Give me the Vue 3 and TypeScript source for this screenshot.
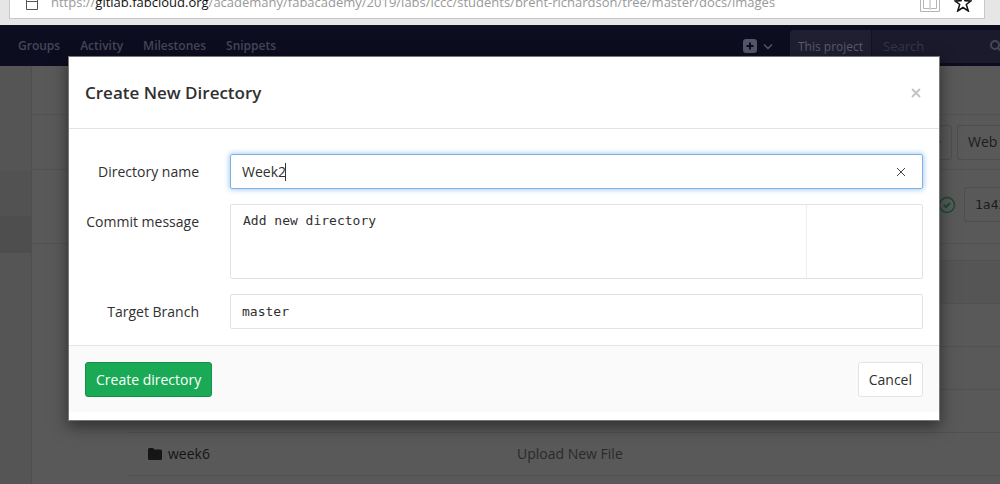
<script setup lang="ts">
import { ref } from 'vue'

const navLinks = ['Groups', 'Activity', 'Milestones', 'Snippets']
const directoryName = ref('Week2')
const commitMessage = ref('Add new directory')
const targetBranch = ref('master')

const rows = [
  { name: '', message: '' },
  { name: '', message: '' },
  { name: '', message: '' },
  { name: 'week6', message: 'Upload New File' },
]
</script>

<template>
  <div class="screen">
    <header class="chrome">
      <div class="address">
        <svg class="lock" width="14" height="18" viewBox="0 0 14 18" fill="none" stroke="#555">
          <path d="M3.5 5.5V4a3.500 3.500 0 0 1 7 0v1.500M1.500 5.500h11v11h-11zM1.500 8.500h11" />
        </svg>
        <a class="url" href="#">https://<b>gitlab.fabcloud.org</b>/academany/fabacademy/2019/labs/iccc/students/brent-richardson/tree/master/docs/images</a>
        <svg class="book" width="20" height="18" viewBox="0 0 20 18" fill="none" stroke="#b5b5b5">
          <path d="M0.5 2.5V17.5H19.5V2.5M3.5 1.5V14.5H9L10 15.5L11 14.5H16.5V1.5M10 1V15" />
        </svg>
        <svg class="star" width="18" height="18" viewBox="0 0 18 18" fill="none" stroke="#111" stroke-width="1.5">
          <path d="M9 1l2 5.700 6 .2-4.700 3.600 2 6.500L9 13.500 3.700 17l2-6.500L1 6.900l6-.2z" />
        </svg>
      </div>
    </header>

    <nav class="navbar">
      <a v-for="link in navLinks" :key="link" href="#">{{ link }}</a>
      <button class="new-menu" type="button" aria-label="New">
        <svg width="32" height="16" viewBox="0 0 32 16">
          <rect x="1" y="1" width="14" height="14" rx="3" fill="#56566a" />
          <path d="M8 4.500v7M4.500 8h7" stroke="#0d0d20" stroke-width="2" fill="none" />
          <path d="M22 6.500l4 4 4-4" stroke="#56566a" stroke-width="1.500" fill="none" />
        </svg>
      </button>
      <div class="search">
        <span class="scope">This project</span>
        <input type="text" placeholder="Search" aria-label="Search" />
        <svg width="11" height="14" viewBox="0 0 11 14" fill="none" stroke="#464658" stroke-width="2">
          <circle cx="6" cy="6" r="4" /><path d="M9 9l4 4" />
        </svg>
      </div>
    </nav>

    <div class="page">
      <aside class="sidebar"><div class="group"></div><div class="active"></div></aside>
      <main class="content">
        <div class="breadcrumbs"></div>
        <div class="actions">
          <button class="page-button" type="button">Tree</button>
          <button class="page-button web" type="button">Web IDE</button>
        </div>
        <div class="commit">
          <svg width="18" height="18" viewBox="0 0 18 18" fill="none" stroke="#174c30" stroke-width="1.500">
            <circle cx="9" cy="9" r="7.500" /><path d="M6 9l2 2 4-4" stroke-width="2" />
          </svg>
          <button class="page-button sha" type="button">1a4213</button>
        </div>
        <table class="files">
          <thead><tr><th></th><th></th></tr></thead>
          <tbody>
            <tr v-for="(row, i) in rows" :key="i">
              <td class="name">
                <a v-if="row.name" href="#">
                  <svg width="14" height="12" viewBox="0 0 14 12" fill="#151515">
                    <path d="M0 1.500Q0 0 1.500 0H5l1.500 1.500h6Q14 1.500 14 3v7.500Q14 12 12.500 12h-11Q0 12 0 10.500z" />
                  </svg>{{ row.name }}
                </a>
              </td>
              <td class="message">{{ row.message }}</td>
            </tr>
          </tbody>
        </table>
      </main>
    </div>

    <div class="modal" role="dialog" aria-labelledby="modal-title">
      <div class="modal-header">
        <h1 id="modal-title">Create New Directory</h1>
        <button class="close" type="button" aria-label="Close">
          <svg width="10" height="10" viewBox="0 0 10 10" fill="none" stroke="#c4c4c4" stroke-width="2">
            <path d="M1 1l8 8M9 1L1 9" />
          </svg>
        </button>
      </div>
      <form @submit.prevent>
        <div class="modal-body">
          <div class="row">
            <label for="dir">Directory name</label>
            <div class="field focused">
              <span class="entry">
                <input id="dir" v-model="directoryName" type="text" size="5" />
                <i class="caret"></i>
              </span>
              <button class="clear" type="button" aria-label="Clear" @click="directoryName = ''">
                <svg width="10" height="10" viewBox="0 0 10 10" fill="none" stroke="#444">
                  <path d="M1 1l8 8M9 1L1 9" />
                </svg>
              </button>
            </div>
          </div>
          <div class="row">
            <label for="message">Commit message</label>
            <div class="field message-field">
              <textarea id="message" v-model="commitMessage"></textarea>
            </div>
          </div>
          <div class="row">
            <label for="branch">Target Branch</label>
            <div class="field"><input id="branch" v-model="targetBranch" class="mono" type="text" /></div>
          </div>
        </div>
        <div class="modal-footer">
          <button class="create" type="submit">Create directory</button>
          <button class="cancel" type="button">Cancel</button>
        </div>
      </form>
    </div>
  </div>
</template>

<style>
body { background: #595959; overflow: hidden; }
</style>

<style scoped>
.screen {
  position: relative;
  height: 100vh;
  overflow: hidden;
  display: flex;
  flex-direction: column;
  font-family: "Open Sans", "Noto Sans", sans-serif;
  font-size: 14px;
  line-height: 20px;
  color: #303030;
}
.screen *, .screen { box-sizing: border-box; }
a { color: inherit; text-decoration: none; }
button, input, textarea { font: inherit; color: inherit; margin: 0; }
button { padding: 0; border: 0; background: none; white-space: nowrap; }
svg { display: block; flex: none; }

.chrome {
  flex: none;
  height: 25px;
  overflow: hidden;
  display: flex;
  align-items: flex-end;
  padding: 0 15px 6px 9px;
  background: #e6e6e6;
}
.address {
  flex: 1;
  min-width: 0;
  height: 36px;
  display: flex;
  align-items: flex-end;
  padding: 0 12px 6px 15px;
  background: #fff;
  border: 1px solid #c8c8c8;
}
.lock { margin-bottom: 1px; }
.url {
  flex: 1;
  min-width: 0;
  padding-left: 12px;
  overflow: hidden;
  white-space: nowrap;
  font-size: 13px;
  color: #999;
}
.url b { font-weight: 400; color: #111; }
.star { margin-left: 14px; }

.navbar {
  flex: none;
  height: 41px;
  display: flex;
  align-items: center;
  gap: 20px;
  padding: 1px 0 0 18px;
  background: #0d0d20;
  color: #464658;
  font-size: 12px;
  font-weight: 600;
}
.new-menu { margin-left: auto; }
.search {
  width: 210px;
  height: 33px;
  display: flex;
  align-items: center;
  background: #1a1a2c;
  border-radius: 4px 0 0 4px;
  font-weight: 400;
  margin-left: -4px;
}
.scope {
  align-self: stretch;
  padding: 7px 8px 0;
  white-space: nowrap;
  border-right: 1px solid #121226;
  background: #1f1f31;
  border-radius: 4px 0 0 4px;
  color: #5a5a6b;
}
.search input {
  flex: 1;
  min-width: 0;
  padding: 0 11px;
  border: 0;
  background: none;
  font-size: 13px;
}
.search input::placeholder { color: #36364a; opacity: 1; }

.page { flex: 1; display: flex; min-height: 0; }
.sidebar {
  flex: none;
  width: 32px;
  padding-top: 105px;
  background: #555;
  border-right: 1px solid #4e4e4e;
}
.group { height: 45px; background: #525252; }
.active { height: 37px; background: #4e4e4e; }
.content { flex: 1; min-width: 0; background: #595959; }
.breadcrumbs { height: 49px; border-bottom: 1px solid #525252; }
.actions {
  height: 55px;
  display: flex;
  align-items: center;
  justify-content: flex-end;
  gap: 5px;
  border-bottom: 1px solid #525252;
  overflow: hidden;
}
.page-button {
  height: 35px;
  padding: 0 10px;
  border: 1px solid #4e4e4e;
  border-radius: 3px;
  color: #1c1c1c;
}
.web, .sha { width: 43px; overflow: hidden; border-right: 0; border-radius: 3px 0 0 3px; text-align: left; }
.commit {
  height: 74px;
  display: flex;
  align-items: center;
  justify-content: flex-end;
  gap: 8px;
  padding-bottom: 4px;
  border-bottom: 1px solid #525252;
}
.sha { width: 36px; font-family: "DejaVu Sans Mono", monospace; font-size: 13px; }
.files {
  width: calc(100% - 97px);
  margin: 16px 0 0 97px;
  border-collapse: collapse;
  table-layout: fixed;
}
.files tr { height: 43px; }
.files thead tr { background: #555; }
.files th, .files td { padding: 0 19px; border-top: 1px solid #515151; text-align: left; }
.files tr > :first-child { width: 369px; }
.files tr:last-child td { border-bottom: 1px solid #515151; }
.name a { display: flex; align-items: center; gap: 6px; color: #151515; }
.message { color: #2a2a2a; }

.modal {
  position: absolute;
  top: 56px;
  left: 68px;
  right: 60px;
  padding-bottom: 8px;
  background: #fff;
  border: 1px solid #777;
  box-shadow: 0 5px 15px rgba(0, 0, 0, 0.5);
}
.modal-header {
  height: 72px;
  display: flex;
  align-items: center;
  justify-content: space-between;
  padding: 0 18px 0 16px;
  border-bottom: 1px solid #e3e3e3;
}
h1 { margin: 0; font-size: 17px; line-height: 24px; font-weight: 600; }
.modal-body {
  display: flex;
  flex-direction: column;
  gap: 15px;
  padding: 25px 16px 16px;
}
.row { display: flex; align-items: flex-start; }
label { flex: none; width: 114px; margin-right: 31px; padding-top: 8px; text-align: right; white-space: nowrap; }
.field {
  flex: 1;
  min-width: 0;
  height: 35px;
  display: flex;
  align-items: center;
  padding: 0 11px;
  border: 1px solid #e3e3e3;
  border-radius: 2px;
}
.field input, .field textarea { width: 100%; padding: 0; border: 0; outline: 0; background: none; }
.focused {
  justify-content: space-between;
  padding-right: 16px;
  border-color: #7eb1e6;
  box-shadow: 0 0 5px 1px #73afea99;
}
.entry { display: flex; align-items: center; }
.entry input { width: 43px; }
.caret { width: 1px; height: 18px; background: #333; }
.message-field {
  height: 75px;
  padding: 6px 12px;
  background: linear-gradient(#eee, #eee) 575px 0 / 1px 100% no-repeat;
}
.field textarea { height: 100%; resize: none; }
.field textarea, .mono { font-family: "DejaVu Sans Mono", "Liberation Mono", monospace; font-size: 13px; }
.modal-footer {
  display: flex;
  justify-content: space-between;
  padding: 16px 16px 15px;
  background: #fafafa;
  border-top: 1px solid #e5e5e5;
}
.modal-footer button { height: 35px; padding: 0 10px; border: 1px solid #e3e3e3; border-radius: 3px; background: #fff; }
.modal-footer .create { background: #1aaa55; border-color: #168f48; color: #fff; }
</style>
